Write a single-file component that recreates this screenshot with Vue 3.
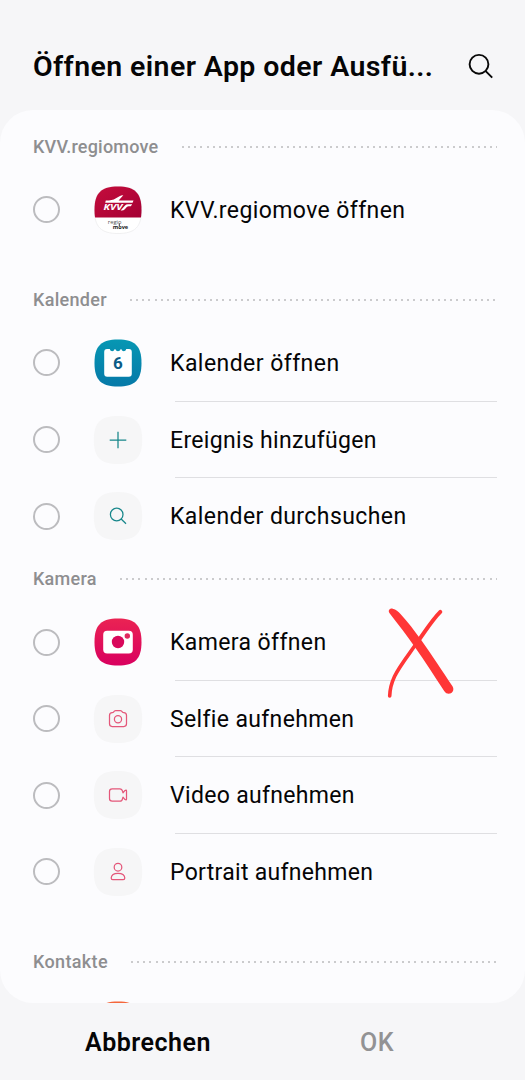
<script setup>
const sections = [
  { name: 'KVV.regiomove', cls: 'first', track: 0.2, rows: [{ icon: 'kvv', label: 'KVV.regiomove öffnen', track: 0.4 }] },
  {
    name: 'Kalender',
    cls: 'spaced',
    track: 0.3,
    rows: [
      { icon: 'calendar', label: 'Kalender öffnen', track: 0.45 },
      { icon: 'plus', label: 'Ereignis hinzufügen', track: 0.32 },
      { icon: 'search', label: 'Kalender durchsuchen', track: 0.42 },
    ],
  },
  {
    name: 'Kamera',
    cls: '',
    track: 0.25,
    rows: [
      { icon: 'camera', label: 'Kamera öffnen', track: 0.38, marked: true },
      { icon: 'selfie', label: 'Selfie aufnehmen', track: 0.35 },
      { icon: 'video', label: 'Video aufnehmen', track: 0.32 },
      { icon: 'portrait', label: 'Portrait aufnehmen', track: 0.3 },
    ],
  },
  { name: 'Kontakte', cls: 'spaced', track: 0.35, rows: [{ icon: 'contacts', label: '', track: 0 }] },
]
const squircle = 'M24 .5C41 .5 47.5 7 47.5 24S41 47.5 24 47.5.5 41 .5 24 7 .5 24 .5Z'
const tile = 'M24 0C41.5 0 48.2 6.8 48.2 24S41.5 48 24 48-.2 41.2-.2 24 6.5 0 24 0Z'
</script>

<template>
  <div class="screen">
    <header class="top">
      <h1>Öffnen einer App oder Ausfü...</h1>
      <svg class="find" width="28" height="28" viewBox="0 0 28 28">
        <circle cx="12" cy="11.3" r="9.4" /><path d="M18.7 18.2L25.2 24.7" />
      </svg>
    </header>

    <main class="card">
      <section v-for="s in sections" :key="s.name" :class="s.cls">
        <div class="head"><h2 :style="{ letterSpacing: s.track + 'px' }">{{ s.name }}</h2><span class="dots"></span></div>
        <div v-for="r in s.rows" :key="r.icon" class="row">
          <span class="radio"></span>
          <svg class="icon" width="48" height="48" viewBox="0 0 48 48">
            <defs>
              <linearGradient id="blue" x2="0" y2="1"><stop stop-color="#0797b3" /><stop offset="1" stop-color="#0679a8" /></linearGradient>
              <linearGradient id="pink" x2="0" y2="1"><stop stop-color="#ea2353" /><stop offset="1" stop-color="#d9005f" /></linearGradient>
              <linearGradient id="red" x2="1" y2="1"><stop stop-color="#c50d3c" /><stop offset="1" stop-color="#a50034" /></linearGradient>
              <clipPath id="shape"><path :d="squircle" /></clipPath>
            </defs>
            <g v-if="r.icon === 'kvv'">
              <path :d="squircle" fill="#fff" stroke="#ececee" stroke-width=".8" />
              <path d="M0 0H48V31.5H0Z" fill="url(#red)" clip-path="url(#shape)" />
              <path d="M11.8 14.6Q18.5 14.6 21.5 12.6L25.5 10.2Q27.5 9.1 29.3 9.3L24.6 14.6H39.5L38.6 16.8H11.2Z" fill="#fff" />
              <path d="M26.6 24.6L31 19.6Q32 18.2 34 18.2H38.2L36.8 20.2H34.6Q33.6 20.2 32.8 21.1L30.8 23.2Q29.6 24.6 27.8 24.6Z" fill="#fff" />
              <text x="9.5" y="24.2" class="kvv" textLength="19" lengthAdjust="spacingAndGlyphs">KVV</text>
              <text class="regio"><tspan x="13.8" y="37.8">regio</tspan><tspan x="18.7" y="42.8" class="move">move</tspan></text>
              <path d="M25.3 37.5V40" stroke="#222" stroke-width=".9" />
            </g>
            <g v-else-if="r.icon === 'calendar'">
              <path :d="squircle" fill="url(#blue)" />
              <path d="M13 10H15.8C16.4 12.9 19.8 12.9 20.4 10.6Q21 9.6 21.6 10.6C22.2 12.9 25.8 12.9 26.4 10.6Q27 9.6 27.6 10.6C28.2 12.9 31.6 12.9 32.2 10H35Q37.8 10 37.8 13V34.8Q37.8 37.8 34.8 37.8H13.2Q10.2 37.8 10.2 34.8V13Q10.2 10 13 10Z" fill="#fff" />
              <text x="24" y="30.4" class="six" text-anchor="middle">6</text>
            </g>
            <g v-else-if="r.icon === 'camera'">
              <path :d="squircle" fill="url(#pink)" />
              <rect x="9.2" y="12.8" width="29.6" height="22.6" rx="4" fill="#fff" />
              <circle cx="24" cy="24" r="6.2" fill="#d9085b" />
              <circle cx="33.3" cy="18" r="2.7" fill="#e0295f" />
            </g>
            <path v-else-if="r.icon === 'contacts'" :d="squircle" fill="#f4673c" />
            <g v-else>
              <path :d="tile" fill="#f6f6f7" />
              <path v-if="r.icon === 'plus'" class="line teal" d="M24 15.7V32.3M15.7 24H32.3" />
              <g v-if="r.icon === 'search'" class="line teal"><circle cx="22.7" cy="22.5" r="6.3" /><path d="M27.2 27L32 31.8" /></g>
              <g v-if="r.icon === 'selfie'" class="line rose">
                <path d="M18.2 17.7Q19.2 17.7 19.7 16.9Q20.3 15.6 21.7 15.6H26.3Q27.7 15.6 28.3 16.9Q28.8 17.7 29.8 17.7Q32.5 17.9 32.5 20.5V28.8Q32.5 31.5 29.8 31.5H18.2Q15.5 31.5 15.5 28.8V20.5Q15.5 17.9 18.2 17.7Z" />
                <circle cx="24" cy="24.2" r="3.6" />
              </g>
              <path v-if="r.icon === 'video'" class="line rose" d="M18.2 17.8H25.8Q28 17.8 28.5 20.2L29 21.8L31 19.4Q32.5 18.4 32.5 20V28Q32.5 29.6 31 28.6L29 26.2L28.5 27.8Q28 30.2 25.8 30.2H18.2Q15.5 30.2 15.5 27.5V20.5Q15.5 17.8 18.2 17.8Z" />
              <g v-if="r.icon === 'portrait'" class="line rose"><circle cx="24" cy="19.2" r="3.8" /><path d="M18.8 31.7Q17.2 31.7 17.2 30C17.4 27.2 20.2 25.4 24 25.4S30.6 27.2 30.8 30Q30.8 31.7 29.2 31.7Z" /></g>
            </g>
          </svg>
          <span class="label" :style="{ letterSpacing: r.track + 'px' }">{{ r.label }}</span>
          <svg v-if="r.marked" class="mark" width="70" height="94" viewBox="0 0 70 94">
            <path d="M4.4 8C2.7 5.4 5 2.9 7.7 3.7C11 4.4 13.3 6.3 15.5 9C23 17 29.5 26 36 34.8C48 51.5 57.5 66.5 67.5 81.3C71 87.3 63 92 59.2 86C49.5 71.5 40 56 29.3 41.3C22 30.5 13.5 20 4.4 8Z" />
            <path class="thin" d="M55.3 6.8C48 14 42 23.5 34 34.8" />
            <path class="thin2" d="M34 34.8C25 48 14.5 61 9.5 71.5C6.5 78 4.9 83 4.7 91" />
          </svg>
        </div>
      </section>
    </main>

    <footer class="bottom">
      <button class="cancel">Abbrechen</button>
      <button class="ok">OK</button>
    </footer>
  </div>
</template>

<style>
html, body { margin: 0; overflow: hidden; }
</style>
<style scoped>
.screen { width: 525px; height: 1080px; display: flex; flex-direction: column; background: #f6f6f8; color: #050506; font-family: Roboto, "Noto Sans", sans-serif; overflow: hidden; }
.top { box-sizing: border-box; height: 109.7px; flex: none; display: flex; align-items: center; justify-content: space-between; padding: 24px 30px 0 33px; }
h1 { margin: 0; font-size: 28.5px; font-weight: 600; letter-spacing: .41px; white-space: nowrap; line-height: 38px; }
.find { fill: none; stroke: #080808; stroke-width: 1.9; }
.card { box-sizing: border-box; height: 893.5px; flex: none; overflow: hidden; border-radius: 33px; background: #fcfcfe; padding-top: 12.6px; }
.spaced { padding-top: 27.2px; }
.head { height: 49.3px; display: flex; align-items: center; gap: 23.5px; padding: 0 28px 0 33px; }
h2 { margin: 0; font-size: 18px; line-height: 24px; font-weight: 500; color: #8e8e90; }
.dots { flex: 1; height: 2px; background: repeating-linear-gradient(90deg, #cbcbcd 0 2px, transparent 2px 6.16px); }
.row { position: relative; height: 76.6px; display: flex; align-items: center; padding-left: 33px; }
.row + .row::before { content: ""; position: absolute; top: -.5px; left: 175px; right: 28px; height: 1px; background: #dfdfe2; }
.radio { box-sizing: border-box; width: 27px; height: 27px; border: 2px solid #bcbcbf; border-radius: 50%; }
.icon { margin-left: 34px; overflow: visible; }
.label { margin-left: 28px; padding-top: 2.4px; font-size: 23px; font-weight: 380; line-height: 30px; white-space: nowrap; }
.line { fill: none; stroke-width: 1.25; stroke-linejoin: round; }
.teal { stroke: #16868a; }
.rose { stroke: #e4577a; }
.kvv { font: italic 700 8.6px "Open Sans", sans-serif; fill: #fff; }
.regio { font: 5.8px "Open Sans", sans-serif; fill: #555; }
.move { font-weight: 700; font-size: 5.6px; fill: #222; }
.six { font: 700 17px Roboto, sans-serif; fill: #0b5c86; }
.mark { position: absolute; left: 385px; top: 1px; z-index: 1; fill: #ff3636; overflow: visible; }
.thin, .thin2 { fill: none; stroke: #ff3636; stroke-width: 4; stroke-linecap: round; }
.thin2 { stroke-width: 3.6; }
.bottom { flex: 1; display: flex; align-items: center; padding-top: 1px; }
button { border: 0; padding: 0; background: none; font: 600 25px Roboto, sans-serif; letter-spacing: .5px; color: #050506; }
.cancel { margin-left: 85px; width: 126px; text-align: left; }
.ok { margin-left: 149px; color: #929294; font-weight: 500; }
</style>
